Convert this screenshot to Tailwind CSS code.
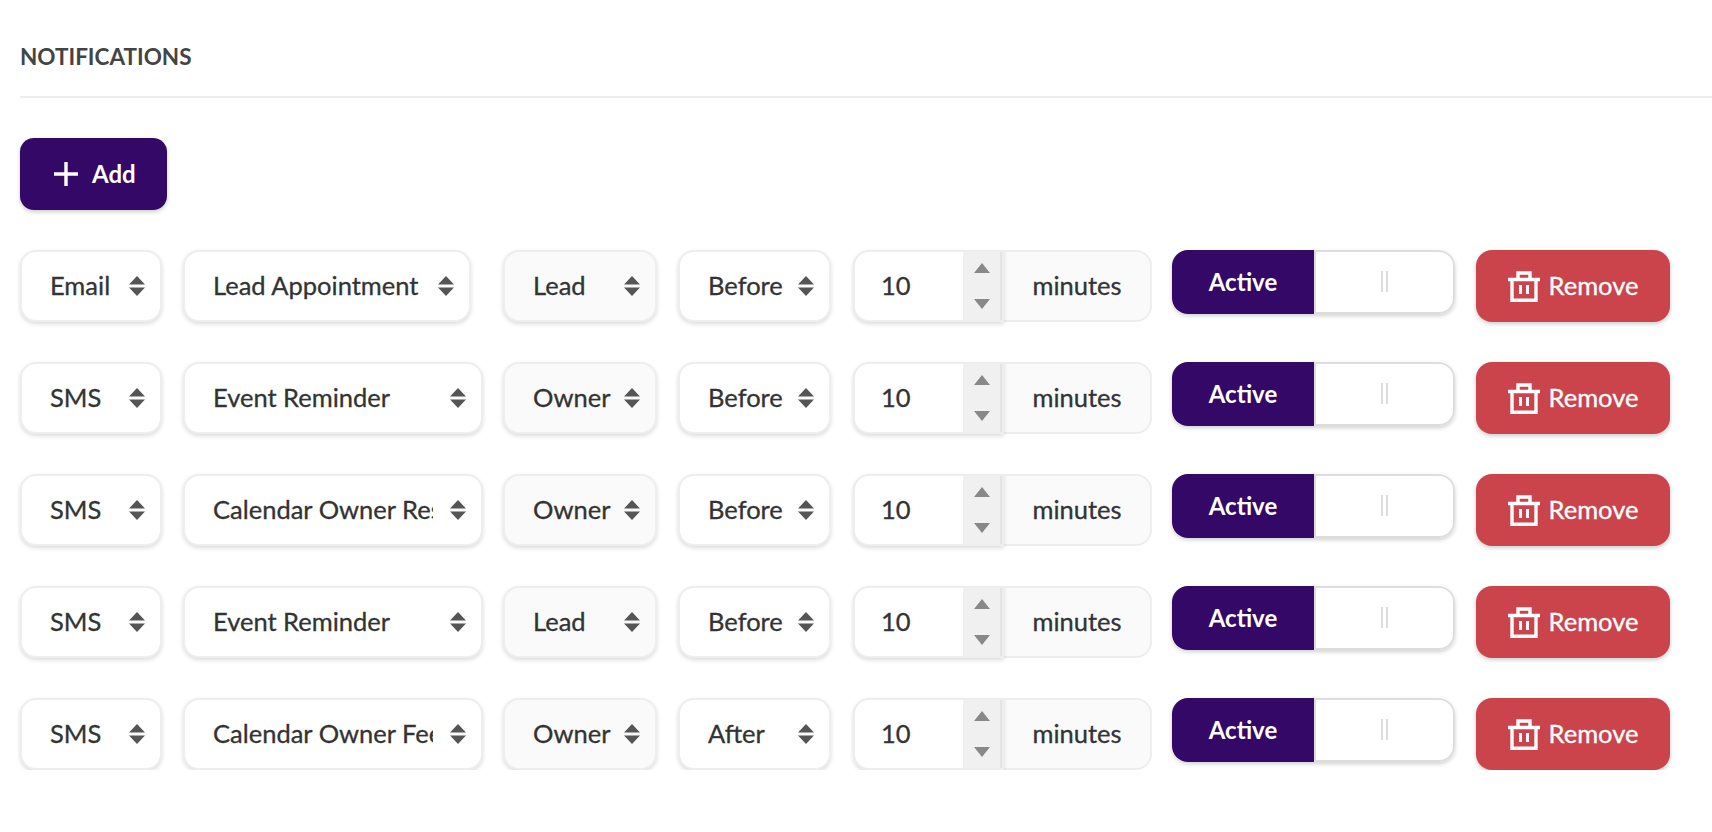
<!DOCTYPE html>
<html lang="en">
<head>
    <meta charset="UTF-8">
    <title>Notifications</title>
    <script src="https://cdn.jsdelivr.net/npm/@tailwindcss/browser@4"></script>
</head>
<body class="bg-white font-['Lato',sans-serif] text-[#333] overflow-hidden">
    <div class="pl-5">
        <div class="h-[98px] border-b-2 border-[#eee] flex items-start">
            <h2 class="mt-[42px] text-[22.500px] leading-[30px] font-bold text-[#444]">NOTIFICATIONS</h2>
        </div>

        <button class="mt-10 w-[147px] h-[72px] rounded-[14px] bg-[#330867] text-white text-[24px] font-bold flex items-center pl-[34px] gap-[14px] shadow-[0_2px_4px_rgba(0,0,0,0.2)]">
            <svg class="w-6 h-6" viewBox="0 0 24 24" fill="none" stroke="currentColor" stroke-width="3.4"><path d="M12 0v24M0 12h24"/></svg>
            <span>Add</span>
        </button>

        <div id="rows" class="mt-10 flex flex-col gap-10"></div>
    </div>

    <script>
        const rows = [
            ['Email', 'Lead Appointment', 'Lead', 'Before', 'w-[288px]'],
            ['SMS', 'Event Reminder', 'Owner', 'Before', 'w-[300px]'],
            ['SMS', 'Calendar Owner Reservation', 'Owner', 'Before', 'w-[300px]'],
            ['SMS', 'Event Reminder', 'Lead', 'Before', 'w-[300px]'],
            ['SMS', 'Calendar Owner Feedback', 'Owner', 'After', 'w-[300px]'],
        ];

        const arrows = `<svg class="absolute right-[15px] top-[24px] w-4 h-[20px] text-[#555]" viewBox="0 0 16 20" fill="currentColor"><path d="M8 0l8 8.500H0zM8 20L0 11.500h16z"/></svg>`;

        function select(label, size, bg) {
            return `<div class="relative ${size} h-[72px] shrink-0 rounded-2xl border-2 border-[#eee] ${bg} shadow-[0_2px_4px_rgba(0,0,0,0.14)] pl-[28px] pb-[2px] flex items-center text-[25.500px] [-webkit-text-stroke:0.3px] overflow-hidden">
                <span class="block w-full overflow-hidden whitespace-nowrap">${label}</span>${arrows}
            </div>`;
        }

        document.getElementById('rows').innerHTML = rows.map(r => `
            <div class="flex items-start h-[72px]">
                ${select(r[0], 'w-[142px] pr-[38px]', 'bg-white')}
                <div class="ml-[21px] w-[320px] shrink-0">${select(r[1], r[4] + ' pr-[48px]', 'bg-white')}</div>
                ${select(r[2], 'w-[154px] pr-[38px]', 'bg-[#fafafa]')}
                <div class="ml-[21px]">${select(r[3], 'w-[153px] pr-[38px]', 'bg-white')}</div>

                <div class="ml-[22px] flex h-[72px] w-[299px] shrink-0">
                    <div class="w-[151px] h-[72px] shrink-0 relative rounded-l-2xl border-2 border-[#eee] bg-white shadow-[0_2px_4px_rgba(0,0,0,0.14)] flex items-center pl-[26px] pb-[2px] text-[25.500px] [-webkit-text-stroke:0.3px] overflow-hidden">
                        10
                        <div class="absolute right-0 top-0 bottom-0 w-[39px] bg-[#f0f0f0] border-r-2 border-[#e4e4e4] flex flex-col items-center justify-between py-[11px]">
                            <svg class="w-4 h-2.5 text-[#888]" viewBox="0 0 16 10" fill="currentColor"><path d="M8 0l8 10H0z"/></svg>
                            <svg class="w-4 h-2.5 text-[#888]" viewBox="0 0 16 10" fill="currentColor"><path d="M8 10L0 0h16z"/></svg>
                        </div>
                    </div>
                    <div class="flex-1 h-[72px] rounded-r-2xl border-2 border-l-0 border-[#eee] bg-[#fafafa] pb-[2px] flex items-center justify-center text-[25.500px] [-webkit-text-stroke:0.3px]">minutes</div>
                </div>

                <div class="ml-5 w-[283px] h-[64px] shrink-0 rounded-2xl flex overflow-hidden shadow-[0_2px_4px_rgba(0,0,0,0.18)]">
                    <div class="w-[142px] bg-[#330867] text-white text-[24px] font-bold flex items-center justify-center">Active</div>
                    <div class="flex-1 rounded-r-2xl border-2 border-[#ddd] flex items-center justify-center gap-[3px] pb-[2px]">
                        <span class="w-[2px] h-[21px] bg-[#ddd]"></span>
                        <span class="w-[2px] h-[21px] bg-[#ddd]"></span>
                    </div>
                </div>

                <button class="ml-[21px] w-[194px] h-[72px] shrink-0 rounded-2xl bg-[#cb444c] text-white text-[25.500px] [-webkit-text-stroke:0.3px] flex items-center justify-center gap-[9px] shadow-[0_2px_4px_rgba(0,0,0,0.2)]">
                    <svg class="w-8 h-[31px]" viewBox="0 0 32 31" fill="none" stroke="currentColor" stroke-width="3.400"><path d="M0 8.500h32M4 8.500v20.800h24V8.500M10 8.500V2h12v6.500"/><path stroke-width="3" d="M12.500 14v9M19.500 14v9"/></svg>
                    <span class="-mt-[2px]">Remove</span>
                </button>
            </div>
        `).join('');
    </script>
</body>
</html>
